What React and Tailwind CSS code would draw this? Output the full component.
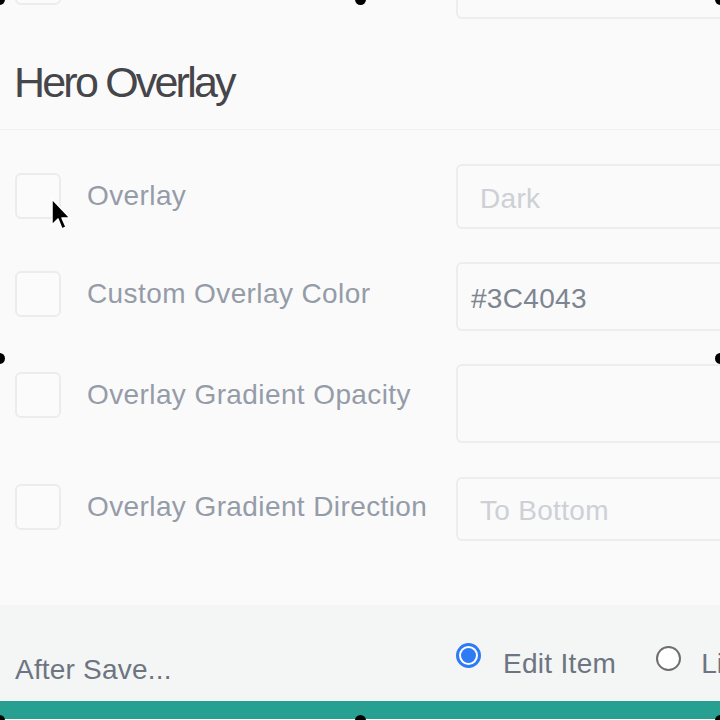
const rows = [
  { label: "Overlay", value: "Dark", placeholder: true, inputH: "h-[65px]", boxMt: "mt-[9px]", rowMt: "mt-[34px]" },
  { label: "Custom Overlay Color", value: "#3C4043", placeholder: false, inputH: "h-[69px]", boxMt: "mt-[9px]", rowMt: "mt-[33px]" },
  { label: "Overlay Gradient Opacity", value: "", placeholder: true, inputH: "h-[79px]", boxMt: "mt-[8px]", rowMt: "mt-[33px]" },
  { label: "Overlay Gradient Direction", value: "To Bottom", placeholder: true, inputH: "h-[64px]", boxMt: "mt-[7px]", rowMt: "mt-[34px]" },
];

function Checkbox({ className = "" }) {
  return (
    <div
      className={`h-[46px] w-[46px] shrink-0 rounded-[6px] border-2 border-[#ececec] bg-[#fbfbfb] ${className}`}
    />
  );
}

function Handle({ className }) {
  return <div className={`absolute h-[11px] w-[11px] rounded-full bg-black ${className}`} />;
}

function FieldRow({ row }) {
  return (
    <div className={`flex items-start ${row.rowMt}`}>
      <div className={`flex w-[456px] shrink-0 items-center pl-[15px] ${row.boxMt}`}>
        <Checkbox />
        <span className="ml-[26px] whitespace-nowrap text-[28px] leading-none tracking-[0.4px] text-[#959ca8]">
          {row.label}
        </span>
      </div>
      <div
        className={`flex flex-1 items-center rounded-l-[6px] border-2 border-r-0 border-[#ededed] bg-[#fafafa] pt-[4px] ${row.inputH} ${
          row.placeholder ? "pl-[22px] text-[#cdd0d4]" : "pl-[13px] text-[#7d8591]"
        } whitespace-nowrap text-[28px] leading-none tracking-[0.3px]`}
      >
        {row.value}
      </div>
    </div>
  );
}

export default function App() {
  return (
    <div
      className="relative h-[720px] w-[720px] overflow-hidden bg-[#fafafa]"
      style={{ fontFamily: '"Liberation Sans", Arial, sans-serif' }}
    >
      {/* tail of the previous row */}
      <div className="flex h-[20px] items-start">
        <div className="w-[456px] shrink-0 pl-[15px]">
          <Checkbox className="-mt-[41px]" />
        </div>
        <div className="-mt-[46px] h-[65px] flex-1 rounded-l-[6px] border-2 border-r-0 border-[#ededed]" />
      </div>

      <div className="flex h-[110px] items-center border-b border-[#f0f0f0] pl-[14px]">
        <h2 className="mt-[16px] text-[43px] leading-none tracking-[-2.8px] text-[#45454a]">
          Hero Overlay
        </h2>
      </div>

      {rows.map((r) => (
        <FieldRow key={r.label} row={r} />
      ))}

      <div className="mt-[64px] flex h-[96px] items-start bg-[#f4f5f5]">
        <span className="mt-[51px] pl-[15px] text-[28px] leading-none tracking-[0.2px] text-[#6c7581]">
          After Save...
        </span>
        <div className="ml-auto flex w-[264px] shrink-0 items-start whitespace-nowrap">
          <div className="mt-[38px] flex h-[25px] w-[25px] shrink-0 items-center justify-center rounded-full border-[3px] border-[#2f7bf5] bg-white">
            <div className="h-[15px] w-[15px] rounded-full bg-[#2f7bf5]" />
          </div>
          <span className="ml-[22px] mt-[45px] text-[28px] leading-none tracking-[0.3px] text-[#6c7581]">
            Edit Item
          </span>
          <div className="ml-[40px] mt-[41px] h-[25px] w-[25px] shrink-0 rounded-full border-2 border-[#6e6e6e] bg-white" />
          <span className="ml-[20px] mt-[45px] text-[28px] leading-none text-[#6c7581]">
            List
          </span>
        </div>
      </div>
      <div className="h-[18px] bg-[#27a091]" />

      <Handle className="-left-[6px] -top-[6px]" />
      <Handle className="left-[355px] -top-[6px]" />
      <Handle className="-right-[6px] -top-[6px]" />
      <Handle className="-left-[6px] top-[353px]" />
      <Handle className="-right-[6px] top-[353px]" />
      <Handle className="-left-[6px] -bottom-[6px]" />
      <Handle className="left-[355px] -bottom-[6px]" />
      <Handle className="-right-[6px] -bottom-[6px]" />

      {/* mouse pointer */}
      <svg className="absolute left-[50px] top-[197px]" width="22" height="36" viewBox="0 0 22 36">
        <path d="M2 2 L2 28 L8 22 L12 32 L16 30 L12 21 L20 21 Z" fill="black" stroke="white" strokeWidth="1.5" strokeLinejoin="round" />
      </svg>
    </div>
  );
}
